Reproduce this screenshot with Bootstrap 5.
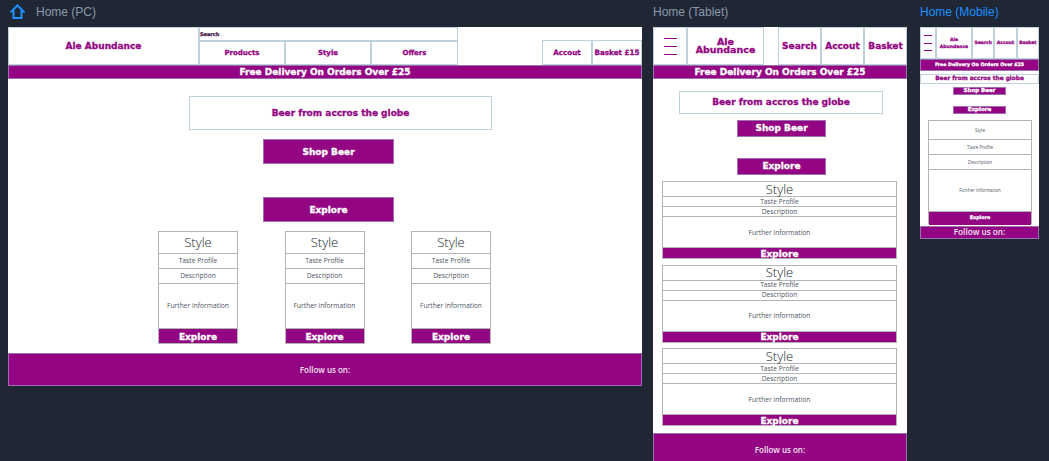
<!DOCTYPE html>
<html lang="en">
<head>
  <meta charset="UTF-8" />
  <meta name="viewport" content="width=device-width, initial-scale=1.0"/>
  <title>Home wireframes</title>
  <link href="https://cdn.jsdelivr.net/npm/bootstrap@5.3.0/dist/css/bootstrap.min.css" rel="stylesheet" />
  <style>
    html, body { height: 461px; overflow: hidden; }
    body { background-color: #1f2735; font-family: "Liberation Sans", Arial, sans-serif; }
    .board { padding-left: 8px; }
    .board-pc { width: 634px; margin-right: 11px; }
    .board-tablet { width: 254px; margin-right: 13px; }
    .board-mobile { width: 119px; }
    .board-label { height: 27px; font-size: 12px; line-height: 24px; color: #8c99aa; white-space: nowrap; }
    .board-label.active { color: #1e90ff; }
    .board-label svg { margin: 0 11px 0 2px; vertical-align: -3px; }
    .frame { background: #fff; }

    .heavy { font-family: "DejaVu Sans", sans-serif; font-weight: 700; color: #940583; -webkit-text-stroke: .3px currentColor; }
    .light { font-family: "Open Sans", "Noto Sans", sans-serif; color: #4c5563; }
    .cell { border: 1px solid #bfd2dc; line-height: 1; text-align: center; }
    .fill { background: #940583; color: #fff; border: 1px solid #9d6eb0; line-height: 1; text-align: center; }
    .fill.heavy { color: #fff; }
    .fill.light { color: #f1e2f0; font-weight: 600; }
    .burger span { display: block; height: 1px; background: #940583; flex-shrink: 0; }

    /* shared tile */
    .tile { border: 1px solid #b4b4b4; }
    .tile > div { border-bottom: 1px solid #b4b4b4; line-height: 1; flex-shrink: 0; }
    .tile > .fill { border: 0; }
    .tile-style { font-weight: 300; color: #20262f; }

    /* PC */
    .pc-top { height: 38px; }
    .pc-logo { width: 191px; font-size: 9px; }
    .pc-mid { width: 259px; }
    .pc-search { height: 14px; font-size: 5px; text-align: left; color: #4a1a4a; }
    .pc-nav > div { width: 86px; font-size: 7px; }
    .pc-nav > div:last-child { width: 87px; }
    .pc-side { height: 25px; font-size: 7.2px; }
    .pc-side > div { width: 50px; white-space: nowrap; }
    .pc-banner { height: 14px; font-size: 9px; }
    .pc-main { height: 274px; padding-top: 17px; }
    .pc-hero { width: 303px; height: 34px; font-size: 9px; margin-left: 31px; }
    .pc-btn { width: 131px; height: 25px; font-size: 9px; margin: 9px 0 0 7px; padding-top: 1px; }
    .pc-btn + .pc-btn { margin-top: 33px; }
    .pc-tiles { gap: 46.5px; margin: 9px 0 0 -1px; }
    .pc-tiles .tile { width: 80px; height: 113px; font-size: 6.7px; }
    .pc-tiles .tile-style { height: 22px; font-size: 13px; }
    .pc-tiles .tile-row { height: 15px; }
    .pc-tiles .tile-info { height: 45px; }
    .pc-tiles .fill { height: 14px; font-size: 9px; padding-top: 2px; }
    .pc-foot { height: 33px; font-size: 8px; }

    /* Tablet */
    .tb-top { height: 38px; }
    .tb-burger { width: 34px; }
    .tb-burger span { width: 13px; margin: 3.5px 0; }
    .tb-logo { width: 77px; font-size: 9.5px; line-height: 8px; }
    .tb-side { width: 129px; font-size: 9px; }
    .tb-side > div { flex: 1 1 0; }
    .tb-banner { height: 14px; font-size: 9px; }
    .tb-main { padding-top: 12px; }
    .tb-hero { width: 204px; height: 23px; font-size: 9px; margin-left: 2px; }
    .tb-btn { width: 89px; height: 17px; font-size: 9px; margin: 6px 0 0 3px; }
    .tb-btn + .tb-btn { margin-top: 21px; }
    .tb-tiles { width: 235px; margin: 6px 0 0 -1px; gap: 5.5px; }
    .tb-tiles .tile { height: 78px; font-size: 6.7px; }
    .tb-tiles .tile-style { height: 15px; font-size: 13px; }
    .tb-tiles .tile-row { height: 10px; padding-top: 1px; }
    .tb-tiles .tile-info { height: 31px; padding-top: 2px; }
    .tb-tiles .fill { height: 10px; font-size: 9px; padding-top: 2px; }
    .tb-foot { height: 34px; margin-top: 7px; font-size: 8px; }

    /* Mobile */
    .mb-top { height: 32px; }
    .mb-burger { width: 16px; }
    .mb-burger span { width: 8px; margin: 3.25px 0; }
    .mb-logo { width: 36px; font-size: 4.5px; line-height: 7px; }
    .mb-side { width: 67px; font-size: 4.5px; }
    .mb-side > div { flex: 1 1 0; }
    .mb-banner { height: 12px; font-size: 4.7px; }
    .mb-main { padding-top: 3px; }
    .mb-hero { width: 119px; height: 10px; font-size: 5.8px; }
    .mb-btn { width: 53px; height: 8px; font-size: 5.5px; margin-top: 3px; }
    .mb-btn + .mb-btn { margin-top: 11px; }
    .mb-tiles { margin: 6px 0 0 1px; width: 104px; }
    .mb-tiles .tile { height: 104px; font-size: 4.5px; }
    .mb-tiles .tile-style { height: 19px; font-weight: 400; color: #4c5563; }
    .mb-tiles .tile-row { height: 15px; }
    .mb-tiles .tile-info { height: 42px; }
    .mb-tiles .fill { height: 13px; font-size: 4.8px; }
    .mb-foot { height: 13px; margin-top: 2px; font-size: 8.2px; }
  </style>
</head>
<body>

  <div class="board d-flex align-items-start">

    <!-- PC -->
    <section class="board-pc flex-shrink-0">
      <div class="board-label">
        <svg width="15" height="15" viewBox="0 0 15 15" fill="none" stroke="#1e90ff" stroke-width="2"><path d="M3.5 14V7.5H1.5L7.5 1.4 13.5 7.5H11.5V14Z"/></svg>Home (PC)
      </div>
      <div class="frame">
        <div class="pc-top d-flex">
          <div class="cell heavy pc-logo d-flex align-items-center justify-content-center">Ale Abundance</div>
          <div class="pc-mid d-flex flex-column">
            <div class="cell heavy pc-search d-flex align-items-center">Search</div>
            <div class="pc-nav heavy d-flex flex-fill">
              <div class="cell d-flex align-items-center justify-content-center">Products</div>
              <div class="cell d-flex align-items-center justify-content-center">Style</div>
              <div class="cell d-flex align-items-center justify-content-center">Offers</div>
            </div>
          </div>
          <div class="pc-side heavy d-flex ms-auto align-self-end">
            <div class="cell d-flex align-items-center justify-content-center">Accout</div>
            <div class="cell d-flex align-items-center justify-content-center">Basket £15</div>
          </div>
        </div>
        <div class="fill heavy pc-banner d-flex align-items-center justify-content-center">Free Delivery On Orders Over £25</div>
        <div class="pc-main d-flex flex-column align-items-center">
          <div class="cell heavy pc-hero d-flex align-items-center justify-content-center">Beer from accros the globe</div>
          <div class="fill heavy pc-btn d-flex align-items-center justify-content-center">Shop Beer</div>
          <div class="fill heavy pc-btn d-flex align-items-center justify-content-center">Explore</div>
          <div class="pc-tiles d-flex">
            <div class="tile light d-flex flex-column text-center">
              <div class="tile-style d-flex align-items-center justify-content-center">Style</div>
              <div class="tile-row d-flex align-items-center justify-content-center">Taste Profile</div>
              <div class="tile-row d-flex align-items-center justify-content-center">Description</div>
              <div class="tile-info d-flex align-items-center justify-content-center">Further information</div>
              <div class="fill heavy d-flex align-items-center justify-content-center">Explore</div>
            </div>
            <div class="tile light d-flex flex-column text-center">
              <div class="tile-style d-flex align-items-center justify-content-center">Style</div>
              <div class="tile-row d-flex align-items-center justify-content-center">Taste Profile</div>
              <div class="tile-row d-flex align-items-center justify-content-center">Description</div>
              <div class="tile-info d-flex align-items-center justify-content-center">Further information</div>
              <div class="fill heavy d-flex align-items-center justify-content-center">Explore</div>
            </div>
            <div class="tile light d-flex flex-column text-center">
              <div class="tile-style d-flex align-items-center justify-content-center">Style</div>
              <div class="tile-row d-flex align-items-center justify-content-center">Taste Profile</div>
              <div class="tile-row d-flex align-items-center justify-content-center">Description</div>
              <div class="tile-info d-flex align-items-center justify-content-center">Further information</div>
              <div class="fill heavy d-flex align-items-center justify-content-center">Explore</div>
            </div>
          </div>
        </div>
        <div class="fill light pc-foot d-flex align-items-center justify-content-center">Follow us on:</div>
      </div>
    </section>

    <!-- Tablet -->
    <section class="board-tablet flex-shrink-0">
      <div class="board-label">Home (Tablet)</div>
      <div class="frame">
        <div class="tb-top d-flex">
          <div class="cell burger tb-burger d-flex flex-column align-items-center justify-content-center"><span></span><span></span><span></span></div>
          <div class="cell heavy tb-logo d-flex align-items-center justify-content-center">Ale Abundance</div>
          <div class="tb-side heavy d-flex ms-auto">
            <div class="cell d-flex align-items-center justify-content-center">Search</div>
            <div class="cell d-flex align-items-center justify-content-center">Accout</div>
            <div class="cell d-flex align-items-center justify-content-center">Basket</div>
          </div>
        </div>
        <div class="fill heavy tb-banner d-flex align-items-center justify-content-center">Free Delivery On Orders Over £25</div>
        <div class="tb-main d-flex flex-column align-items-center">
          <div class="cell heavy tb-hero d-flex align-items-center justify-content-center">Beer from accros the globe</div>
          <div class="fill heavy tb-btn d-flex align-items-center justify-content-center">Shop Beer</div>
          <div class="fill heavy tb-btn d-flex align-items-center justify-content-center">Explore</div>
          <div class="tb-tiles d-flex flex-column">
            <div class="tile light d-flex flex-column text-center">
              <div class="tile-style d-flex align-items-center justify-content-center">Style</div>
              <div class="tile-row d-flex align-items-center justify-content-center">Taste Profile</div>
              <div class="tile-row d-flex align-items-center justify-content-center">Description</div>
              <div class="tile-info d-flex align-items-center justify-content-center">Further information</div>
              <div class="fill heavy d-flex align-items-center justify-content-center">Explore</div>
            </div>
            <div class="tile light d-flex flex-column text-center">
              <div class="tile-style d-flex align-items-center justify-content-center">Style</div>
              <div class="tile-row d-flex align-items-center justify-content-center">Taste Profile</div>
              <div class="tile-row d-flex align-items-center justify-content-center">Description</div>
              <div class="tile-info d-flex align-items-center justify-content-center">Further information</div>
              <div class="fill heavy d-flex align-items-center justify-content-center">Explore</div>
            </div>
            <div class="tile light d-flex flex-column text-center">
              <div class="tile-style d-flex align-items-center justify-content-center">Style</div>
              <div class="tile-row d-flex align-items-center justify-content-center">Taste Profile</div>
              <div class="tile-row d-flex align-items-center justify-content-center">Description</div>
              <div class="tile-info d-flex align-items-center justify-content-center">Further information</div>
              <div class="fill heavy d-flex align-items-center justify-content-center">Explore</div>
            </div>
          </div>
        </div>
        <div class="fill light tb-foot d-flex align-items-center justify-content-center">Follow us on:</div>
      </div>
    </section>

    <!-- Mobile -->
    <section class="board-mobile flex-shrink-0">
      <div class="board-label active">Home (Mobile)</div>
      <div class="frame">
        <div class="mb-top d-flex">
          <div class="cell burger mb-burger d-flex flex-column align-items-center justify-content-center"><span></span><span></span><span></span></div>
          <div class="cell heavy mb-logo d-flex align-items-center justify-content-center">Ale Abundance</div>
          <div class="mb-side heavy d-flex">
            <div class="cell d-flex align-items-center justify-content-center">Search</div>
            <div class="cell d-flex align-items-center justify-content-center">Accout</div>
            <div class="cell d-flex align-items-center justify-content-center">Basket</div>
          </div>
        </div>
        <div class="fill heavy mb-banner d-flex align-items-center justify-content-center">Free Delivery On Orders Over £25</div>
        <div class="mb-main d-flex flex-column align-items-center">
          <div class="cell heavy mb-hero d-flex align-items-center justify-content-center">Beer from accros the globe</div>
          <div class="fill heavy mb-btn d-flex align-items-center justify-content-center">Shop Beer</div>
          <div class="fill heavy mb-btn d-flex align-items-center justify-content-center">Explore</div>
          <div class="mb-tiles">
            <div class="tile light d-flex flex-column text-center">
              <div class="tile-style d-flex align-items-center justify-content-center">Style</div>
              <div class="tile-row d-flex align-items-center justify-content-center">Taste Profile</div>
              <div class="tile-row d-flex align-items-center justify-content-center">Description</div>
              <div class="tile-info d-flex align-items-center justify-content-center">Further information</div>
              <div class="fill heavy d-flex align-items-center justify-content-center">Explore</div>
            </div>
          </div>
        </div>
        <div class="fill light mb-foot d-flex align-items-center justify-content-center">Follow us on:</div>
      </div>
    </section>

  </div>

  <script src="https://cdn.jsdelivr.net/npm/bootstrap@5.3.0/dist/js/bootstrap.bundle.min.js"></script>
</body>
</html>
